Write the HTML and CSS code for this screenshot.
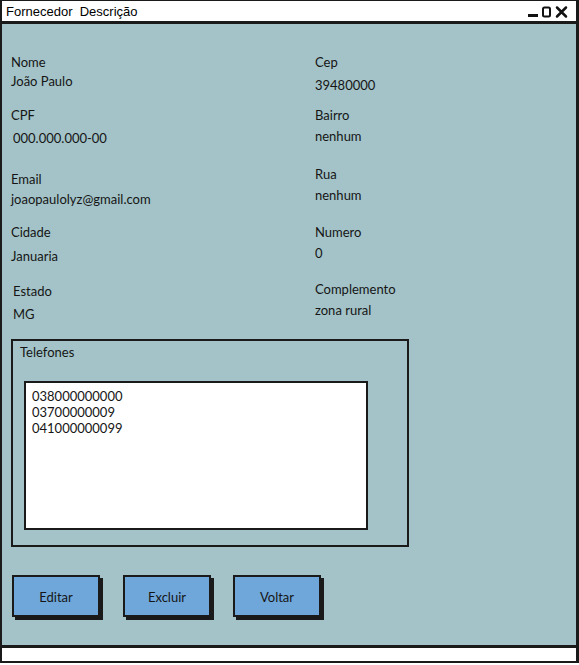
FILE: index.html
```html
<!DOCTYPE html>
<html lang="pt">
<head>
<meta charset="utf-8">
<title>Fornecedor Descrição</title>
<link rel="stylesheet" href="styles.css">
</head>
<body>
<div class="window">
  <div class="titlebar">
    <span class="title">Fornecedor  Descrição</span>
    <svg class="controls" width="44" height="14" viewBox="0 0 44 14">
      <rect x="1" y="9" width="10" height="3" fill="#111"/>
      <rect x="16" y="2.5" width="7" height="9" rx="1.5" fill="none" stroke="#111" stroke-width="2"/>
      <path d="M30 2.5 L39 11.5 M39 2.5 L30 11.5" stroke="#111" stroke-width="2.5" stroke-linecap="round"/>
    </svg>
  </div>
  <div class="content">
    <div class="fields">
      <div class="col col-left">
        <div class="field f1"><div class="label">Nome</div><div class="value">João Paulo</div></div>
        <div class="field f2"><div class="label">CPF</div><div class="value indent">000.000.000-00</div></div>
        <div class="field f3"><div class="label">Email</div><div class="value">joaopaulolyz@gmail.com</div></div>
        <div class="field f4"><div class="label">Cidade</div><div class="value">Januaria</div></div>
        <div class="field f5 indent"><div class="label">Estado</div><div class="value">MG</div></div>
      </div>
      <div class="col col-right">
        <div class="field f1"><div class="label">Cep</div><div class="value">39480000</div></div>
        <div class="field f2"><div class="label">Bairro</div><div class="value">nenhum</div></div>
        <div class="field f3"><div class="label">Rua</div><div class="value">nenhum</div></div>
        <div class="field f4"><div class="label">Numero</div><div class="value">0</div></div>
        <div class="field f5"><div class="label">Complemento</div><div class="value">zona rural</div></div>
      </div>
    </div>
    <div class="group">
      <div class="group-label">Telefones</div>
      <div class="listbox">
        <div class="item">038000000000</div>
        <div class="item">03700000009</div>
        <div class="item">041000000099</div>
      </div>
    </div>
    <div class="buttons">
      <button class="btn">Editar</button>
      <button class="btn btn-mid">Excluir</button>
      <button class="btn">Voltar</button>
    </div>
  </div>
  <div class="statusbar"></div>
</div>
</body>
</html>
```

FILE: styles.css
```css
* { box-sizing: border-box; }
html, body { margin: 0; padding: 0; background: #fff; }
body { font-family: Lato, "Open Sans", sans-serif; color: #151515; }

.window {
  width: 579px;
  height: 663px;
  border-left: 2px solid #1a1a1a;
  border-right: 3px solid #1a1a1a;
  border-top: 1px solid #1a1a1a;
  border-bottom: 2px solid #1a1a1a;
  display: flex;
  flex-direction: column;
}

.titlebar {
  height: 23px;
  background: #fff;
  border-bottom: 3px solid #1a1a1a;
  display: flex;
  align-items: center;
  justify-content: space-between;
  padding: 0 5px 0 4px;
}
.title {
  font-family: "Liberation Sans", Arial, sans-serif;
  font-size: 13px;
  white-space: pre;
  color: #000;
  padding-top: 1px;
}
.controls { display: block; margin-top: 1px; }

.content {
  flex: 1;
  background: #a3c3c8;
  border-bottom: 3px solid #1a1a1a;
  padding: 30px 0 0 9px;
  display: flex;
  flex-direction: column;
  font-size: 13px;
}

.fields { display: flex; }
.col { display: flex; flex-direction: column; }
.col-left { width: 304px; }
.label, .value { line-height: 16px; white-space: nowrap; }
.indent { padding-left: 2px; }

.col-left .f1 .value { margin-top: 3px; }
.col-left .f2 { margin-top: 18px; }
.col-left .f2 .value { margin-top: 7px; }
.col-left .f3 { margin-top: 25px; }
.col-left .f3 .value { margin-top: 4px; }
.col-left .f4 { margin-top: 17px; }
.col-left .f4 .value { margin-top: 8px; }
.col-left .f5 { margin-top: 19px; }
.col-left .f5 .value { margin-top: 7px; }

.col-right .f1 .value { margin-top: 7px; }
.col-right .f2 { margin-top: 14px; }
.col-right .f2 .value { margin-top: 5px; }
.col-right .f3 { margin-top: 22px; }
.col-right .f3 .value { margin-top: 5px; }
.col-right .f4 { margin-top: 21px; }
.col-right .f4 .value { margin-top: 5px; }
.col-right .f5 { margin-top: 20px; }
.col-right .f5 .value { margin-top: 5px; }

.group {
  margin-top: 17px;
  width: 398px;
  height: 208px;
  border: 2px solid #1a1a1a;
  padding: 3px 0 0 7px;
}
.group-label { line-height: 16px; }
.listbox {
  margin: 21px 0 0 4px;
  width: 344px;
  height: 149px;
  background: #fff;
  border: 2px solid #1a1a1a;
  padding: 5px 0 0 6px;
}
.item { line-height: 16px; }

.buttons {
  margin-top: 28px;
  padding-left: 1px;
  display: flex;
  gap: 22px;
}
.btn-mid { margin-left: 1px; }
.btn {
  width: 88px;
  height: 42px;
  background: #6fa7db;
  border: 2px solid #1a1a1a;
  box-shadow: 3px 3px 0 #1a1a1a;
  font-family: Lato, "Open Sans", sans-serif;
  font-size: 13px;
  color: #151515;
  padding: 2px 0 0;
}

.statusbar {
  height: 13px;
  background: #fff;
}
```
